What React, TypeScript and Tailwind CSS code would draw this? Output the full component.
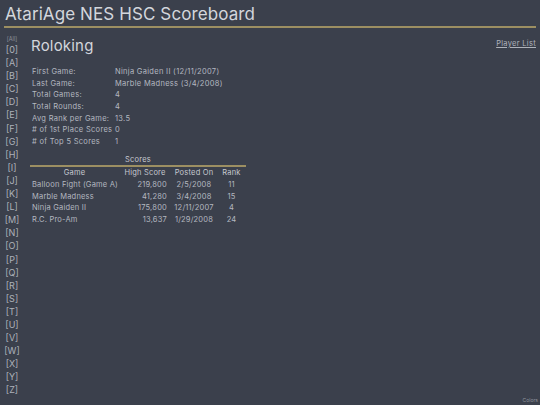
const letters = ['0', 'A', 'B', 'C', 'D', 'E', 'F', 'G', 'H', 'I', 'J', 'K', 'L', 'M', 'N', 'O', 'P', 'Q', 'R', 'S', 'T', 'U', 'V', 'W', 'X', 'Y', 'Z']

const stats: [string, string][] = [
  ['First Game:', 'Ninja Gaiden II (12/11/2007)'],
  ['Last Game:', 'Marble Madness (3/4/2008)'],
  ['Total Games:', '4'],
  ['Total Rounds:', '4'],
  ['Avg Rank per Game:', '13.5'],
  ['# of 1st Place Scores', '0'],
  ['# of Top 5 Scores', '1'],
]

const scores = [
  { game: 'Balloon Fight (Game A)', score: '219,800', date: '2/5/2008', rank: '11' },
  { game: 'Marble Madness', score: '41,280', date: '3/4/2008', rank: '15' },
  { game: 'Ninja Gaiden II', score: '175,800', date: '12/11/2007', rank: '4' },
  { game: 'R.C. Pro-Am', score: '13,637', date: '1/29/2008', rank: '24' },
]

export default function App() {
  return (
    <div className="w-[540px] h-[405px] bg-[#3b404c] text-[#b4b8c0] relative overflow-hidden" style={{ fontFamily: 'Inter, "Noto Sans", sans-serif' }}>
      <header className="px-[4px] pt-[3px]">
        <h1 className="text-[17px] leading-[22px] text-[#d3d6dc] tracking-[0.1px] pl-[1px]">AtariAge NES HSC Scoreboard</h1>
        <div className="h-[2px] bg-[#9c8f62] mt-[1px]" />
      </header>
      <div className="flex">
        <nav className="w-[24px] flex flex-col items-center pt-[8px] text-[#aeb2ba]">
          <span className="text-[5.5px] leading-[7px] text-[#8f949c]">[All]</span>
          {letters.map((l) => (
            <span key={l} className="text-[9px] leading-[13.1px]">[{l}]</span>
          ))}
        </nav>
        <main className="flex-1 pl-[7px] pr-[4px] pt-[8px]">
          <div className="flex justify-between items-start">
            <h2 className="text-[15px] leading-[20px] text-[#d3d6dc] tracking-[0.2px]">Roloking</h2>
            <a className="text-[7.5px] leading-[10px] underline text-[#aeb2ba] mt-[3px] tracking-[0.3px]">Player List</a>
          </div>
          <table className="mt-[10px] text-[7.5px] border-collapse tracking-[0.3px]">
            <tbody>
              {stats.map(([k, v]) => (
                <tr key={k} className="h-[11.7px]">
                  <td className="w-[84px] pl-[1px] leading-[10px] whitespace-nowrap">{k}</td>
                  <td className="leading-[10px] whitespace-nowrap">{v}</td>
                </tr>
              ))}
            </tbody>
          </table>
          <table className="mt-[7px] -ml-[1px] text-[7.5px] border-collapse w-[216px] tracking-[0.2px] table-fixed">
            <caption className="text-[#c6c9d0] leading-[10px] border-b-2 border-[#9c8f62]">Scores</caption>
            <thead>
              <tr className="text-[#c6c9d0] h-[12px]">
                <th className="font-normal w-[89px]">Game</th>
                <th className="font-normal w-[52px] whitespace-nowrap">High Score</th>
                <th className="font-normal w-[46px] whitespace-nowrap">Posted On</th>
                <th className="font-normal">Rank</th>
              </tr>
            </thead>
            <tbody>
              {scores.map((s) => (
                <tr key={s.game} className="h-[11.7px]">
                  <td className="pl-[2px] whitespace-nowrap">{s.game}</td>
                  <td className="text-right pr-[4px]">{s.score}</td>
                  <td className="text-center">{s.date}</td>
                  <td className="text-center">{s.rank}</td>
                </tr>
              ))}
            </tbody>
          </table>
        </main>
      </div>
      <span className="absolute right-[2px] bottom-[1px] text-[5px] text-[#8f949c]">Colors</span>
    </div>
  )
}
